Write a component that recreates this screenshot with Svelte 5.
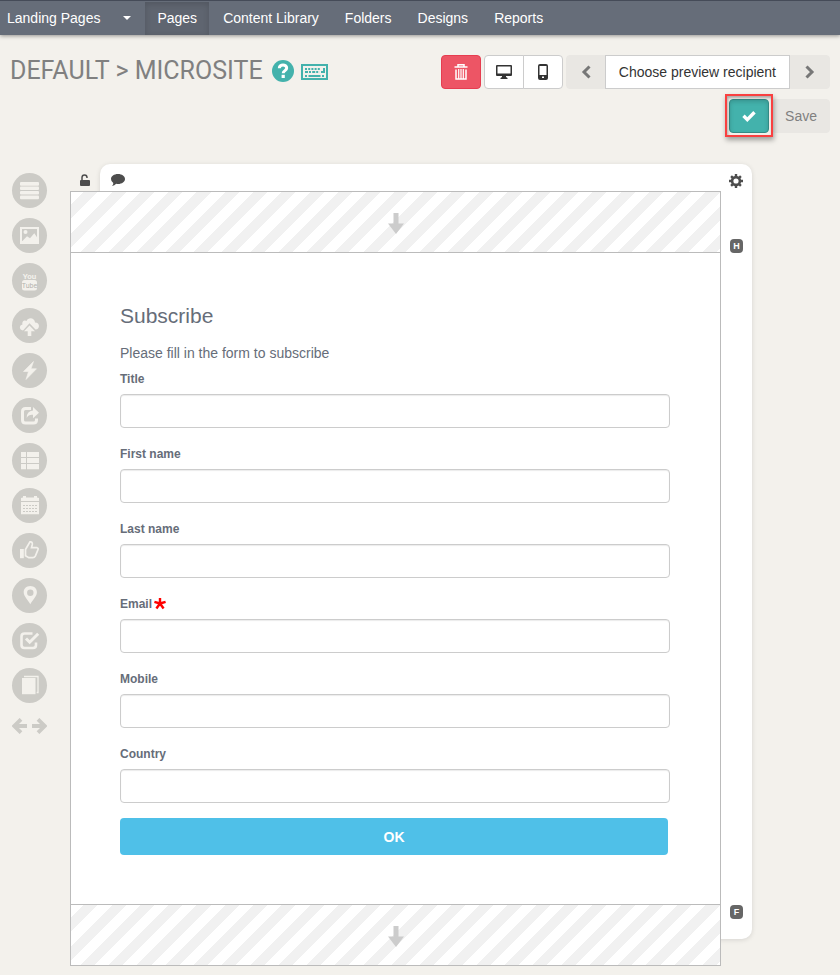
<script lang="ts">
    const menu = ["Pages", "Content Library", "Folders", "Designs", "Reports"];
    let active = "Pages";

    const tools = [
        { id: "text", label: "Text" },
        { id: "image", label: "Image" },
        { id: "youtube", label: "Video" },
        { id: "upload", label: "Upload" },
        { id: "bolt", label: "Action" },
        { id: "share", label: "Share" },
        { id: "list", label: "List" },
        { id: "calendar", label: "Calendar" },
        { id: "like", label: "Like" },
        { id: "marker", label: "Location" },
        { id: "form", label: "Form" },
        { id: "copy", label: "Copy" },
    ];

    let fields = [
        { id: "title", label: "Title", value: "", required: false },
        { id: "firstname", label: "First name", value: "", required: false },
        { id: "lastname", label: "Last name", value: "", required: false },
        { id: "email", label: "Email", value: "", required: true },
        { id: "mobile", label: "Mobile", value: "", required: false },
        { id: "country", label: "Country", value: "", required: false },
    ];
</script>

<svelte:head>
    <title>Default > Microsite</title>
</svelte:head>

<nav class="navbar">
    <a class="brand" href="#landing">Landing Pages</a>
    <button class="caret-btn" aria-label="Switch module">
        <span class="caret"></span>
    </button>
    <div class="menu">
        {#each menu as item}
            <a
                href="#{item}"
                class:active={item === active}
                on:click={() => (active = item)}>{item}</a
            >
        {/each}
    </div>
</nav>

<header class="page-header">
    <div class="heading">
        <h1>DEFAULT &gt; MICROSITE</h1>
        <a href="#help" aria-label="Help">
            <svg width="22" height="22" viewBox="0 0 22 22">
                <circle cx="11" cy="11" r="11" fill="#43b2ac" />
                <path d="M7.3 8.2C7.3 3.8 14.7 3.9 14.7 8.1C14.7 10.6 11.2 10.6 11.2 13.2" fill="none" stroke="#fff" stroke-width="3" />
                <rect x="9.6" y="14.8" width="3.2" height="3.2" fill="#fff" />
            </svg>
        </a>
        <a href="#shortcuts" aria-label="Keyboard shortcuts">
            <svg width="27" height="22" viewBox="0 0 27 22">
                <rect x="1" y="5" width="25" height="14" fill="none" stroke="#43b2ac" stroke-width="2" />
                <g stroke="#43b2ac" stroke-width="2" fill="none">
                    <path d="M4 9h16" stroke-dasharray="2 1.2" />
                    <path d="M4 12h14.500" stroke-dasharray="3 1 2 1.200" />
                    <path d="M20 12h3V8" />
                    <path d="M4 16h2M7.500 16h12M21 16h2" />
                </g>
            </svg>
        </a>
    </div>

    <div class="toolbar">
        <div class="toolbar-row">
            <button class="btn danger" aria-label="Delete">
                <svg width="14" height="16" viewBox="0 0 14 16">
                    <path d="M4 2.500V.8h6v1.700M.5 3h13" fill="none" stroke="#fff" stroke-width="1.500" />
                    <path d="M2 5.500v9.500h10V5.500" fill="none" stroke="#fff" stroke-width="1.500" />
                    <path d="M4.700 5v10M7 5v10M9.300 5v10" stroke="#fff" stroke-width="1.200" />
                </svg>
            </button>
            <div class="group">
                <button class="btn" aria-label="Desktop preview">
                    <svg width="16" height="14" viewBox="0 0 16 14">
                        <path fill="#333" fill-rule="evenodd" d="M1 0h14a1 1 0 0 1 1 1v9a1 1 0 0 1-1 1h-5v1l1.500 1v1h-7v-1L6 12v-1H1a1 1 0 0 1-1-1V1a1 1 0 0 1 1-1zM1.500 1.500v7h13v-7z" />
                    </svg>
                </button>
                <button class="btn" aria-label="Mobile preview">
                    <svg width="10" height="16" viewBox="0 0 10 16">
                        <path fill="#333" fill-rule="evenodd" d="M2 0h6a2 2 0 0 1 2 2v12a2 2 0 0 1-2 2H2a2 2 0 0 1-2-2V2a2 2 0 0 1 2-2zM1.500 2v9h7V2zM4 12.500v1.500h2v-1.500z" />
                    </svg>
                </button>
            </div>
            <div class="group">
                <button class="btn muted" aria-label="Previous recipient">
                    <svg width="10" height="14" viewBox="0 0 10 14">
                        <path d="M8.500 1.500L3 7l5.500 5.500" fill="none" stroke="#777" stroke-width="3" />
                    </svg>
                </button>
                <button class="btn recipient">Choose preview recipient</button>
                <button class="btn muted" aria-label="Next recipient">
                    <svg width="10" height="14" viewBox="0 0 10 14">
                        <path d="M1.500 1.500L7 7l-5.500 5.500" fill="none" stroke="#777" stroke-width="3" />
                    </svg>
                </button>
            </div>
        </div>
        <div class="toolbar-row">
            <button class="btn confirm" aria-label="Approve">
                <svg width="14" height="12" viewBox="0 0 14 12">
                    <path d="M1.500 5.800l3.800 3.800L12.500 2.200" fill="none" stroke="#fff" stroke-width="3.400" />
                </svg>
            </button>
            <button class="btn muted save">Save</button>
        </div>
    </div>
</header>

<main class="workspace">
    <aside class="tools">
        {#each tools as tool (tool.id)}
            <button class="tool" aria-label={tool.label}>
                <svg width="35" height="35" viewBox="0 0 35 35" fill="#f3f1ec">
                    {#if tool.id === "text"}
                        <rect x="8" y="9" width="19" height="3.700" rx="1" />
                        <rect x="8" y="13.600" width="19" height="3.500" rx="1" />
                        <rect x="8" y="18" width="19" height="3.500" rx="1" />
                        <rect x="8" y="22.500" width="19" height="3.700" rx="1" />
                    {:else if tool.id === "image"}
                        <path fill-rule="evenodd" d="M8 9h19v17H8zM10 11v12h.4l4.600-4.800 3 2 4.300-5 2.700 4V11z" />
                        <circle cx="13.500" cy="14" r="2" />
                    {:else if tool.id === "youtube"}
                        <text x="17.500" y="16" class="yt">You</text>
                        <rect x="10" y="17" width="15" height="10.500" rx="2.500" />
                        <text x="17.500" y="25" class="yt tube">Tube</text>
                    {:else if tool.id === "upload"}
                        <path d="M11 22.500C7 22 7 17 10.500 16.500C9.500 13 13 11.500 14.500 13C16 8.500 23 9.500 23 14.500C28.500 14.500 28 21.500 23.500 21.500L17.500 15.300z" />
                        <path d="M17.500 17.500l5.500 5.700h-3.700V28h-3.600v-4.800H12z" />
                    {:else if tool.id === "bolt"}
                        <path d="M21.500 8.500L11.500 18.500H16.500L14 26.500L24.500 15.800H19z" stroke="#f3f1ec" stroke-width=".6" />
                    {:else if tool.id === "share"}
                        <path d="M19 10.500h-5.500q-3 0-3 3V22q0 3 3 3h8q3 0 3-3v-1.500" fill="none" stroke="#f3f1ec" stroke-width="3" />
                        <path d="M21 9l6 5.700-6 5.600v-3.500q-4.500-.5-6.300 3.200Q14.500 13 21 12.500z" />
                    {:else if tool.id === "list"}
                        <path d="M9 9h5v5H9zM15 9h12v5H15zM9 15h5v5H9zM15 15h12v5H15zM9 21h5v5.300H9zM15 21h12v5.300H15z" />
                    {:else if tool.id === "calendar"}
                        <path d="M9 10l2-.5V8h3v1.500h8V8h3v1.500l2 .5v3H9zM9 14h18v12.300H9z" />
                        <path d="M11 17.500h14M11 20.500h14M11 23.500h14" stroke="#cccbc6" stroke-dasharray="2 1" />
                    {:else if tool.id === "like"}
                        <path d="M8 16h3.800v9.200H8z" />
                        <path d="M13.500 16.500L18 8.900q2.700-.4 2.300 2.500l-.8 3.300h5.500q1.800.5.800 2.500l-2.500 6q-.8 1.500-2.500 1.500h-4l-3.300-2z" fill="none" stroke="#f3f1ec" stroke-width="1.700" />
                    {:else if tool.id === "marker"}
                        <path fill-rule="evenodd" d="M18.300 8c4 0 6.600 2.800 6.600 6.300 0 4-4 7.500-6.600 11.900-2.600-4.400-6.600-7.900-6.600-11.900C11.700 10.800 14.300 8 18.300 8zm0 3.500a3.200 3.200 0 1 0 0 6.400 3.200 3.200 0 0 0 0-6.400z" />
                    {:else if tool.id === "form"}
                        <path d="M20.500 10.500h-8q-3 0-3 3v8.500q0 3 3 3h8.500q3 0 3-3v-2.500" fill="none" stroke="#f3f1ec" stroke-width="2.600" />
                        <path d="M14 15.500l3.700 3.700 8.500-8.500" fill="none" stroke="#f3f1ec" stroke-width="3" />
                    {:else}
                        <path d="M10 10h13.500v16.200H10z" />
                        <path d="M12 8.500h14V24.500h-1.300" fill="none" stroke="#f3f1ec" stroke-width="1.300" />
                    {/if}
                </svg>
            </button>
        {/each}
        <button class="resize" aria-label="Resize panel">
            <svg width="35" height="16" viewBox="0 0 35 16">
                <g fill="none" stroke="#cccbc6" stroke-width="3.800">
                    <path d="M9 1.300L2.300 8 9 14.700M3 8h12" />
                    <path d="M26 1.300L32.700 8 26 14.700M32 8H20" />
                </g>
            </svg>
        </button>
    </aside>

    <section class="editor">
        <div class="tabs">
            <button class="tab" aria-label="Unlock">
                <svg width="10" height="12" viewBox="0 0 10 12">
                    <rect y="6" width="10" height="6" rx="1" fill="#4d4d4d" />
                    <path d="M2 6V3.500Q2 .9 4.500.9T7 3.500V4" fill="none" stroke="#4d4d4d" stroke-width="1.500" />
                </svg>
            </button>
            <button class="tab" aria-label="Comments">
                <svg width="14" height="12" viewBox="0 0 14 12">
                    <path d="M7 0c4 0 7 2.200 7 5s-3 5-7 5q-1 0-1.800-.2Q3.500 11.800 1 12q1.500-1.300 1.300-3Q0 7.500 0 5c0-2.800 3-5 7-5z" fill="#4d4d4d" />
                </svg>
            </button>
            <button class="tab settings" aria-label="Settings">
                <svg width="14" height="14" viewBox="0 0 14 14">
                    <circle cx="7" cy="7" r="3.900" fill="none" stroke="#4d4d4d" stroke-width="2.600" />
                    <path d="M7 0v2.500M7 11.500V14M0 7h2.500M11.500 7H14M2.100 2.100l1.700 1.700M10.200 10.200l1.700 1.700M11.900 2.100l-1.700 1.700M3.800 10.200l-1.700 1.700" stroke="#4d4d4d" stroke-width="2.400" />
                </svg>
            </button>
        </div>

        <div class="body">
            <div class="canvas">
                <div class="dropzone">
                    <svg width="16" height="21" viewBox="0 0 16 21">
                        <path d="M5.500 0h5v10.500H16L8 21 0 10.500h5.500z" fill="#ccc" />
                    </svg>
                </div>

                <form class="subscribe" on:submit|preventDefault>
                    <h2>Subscribe</h2>
                    <p>Please fill in the form to subscribe</p>
                    <div class="fields">
                        {#each fields as field (field.id)}
                            <div class="field">
                                <label for={field.id}>
                                    {field.label}
                                    {#if field.required}
                                        <svg width="12" height="12" viewBox="0 0 12 12">
                                            <path d="M6 5.500V0M6 5.500L.4 3.800M6 5.500l5.600-1.700M6 5.500l-3.600 5M6 5.500l3.600 5" stroke="#f00" stroke-width="2.400" />
                                        </svg>
                                    {/if}
                                </label>
                                <input
                                    type="text"
                                    id={field.id}
                                    bind:value={field.value}
                                    required={field.required}
                                />
                            </div>
                        {/each}
                    </div>
                    <button type="submit" class="ok">OK</button>
                </form>

                <div class="dropzone">
                    <svg width="16" height="21" viewBox="0 0 16 21">
                        <path d="M5.500 0h5v10.500H16L8 21 0 10.500h5.500z" fill="#ccc" />
                    </svg>
                </div>
            </div>
            <div class="rail">
                <span class="badge">H</span>
                <span class="badge">F</span>
            </div>
        </div>
    </section>
</main>

<style>
    :global(body) {
        background: #f3f1ec;
        color: #333;
        font-family: "Liberation Sans", Arial, sans-serif;
        font-size: 14px;
        line-height: 20px;
    }

    button {
        font: inherit;
        color: inherit;
        cursor: pointer;
        padding: 0;
        border: none;
        background: none;
    }

    svg {
        display: block;
        flex-shrink: 0;
    }

    .navbar {
        display: flex;
        height: 34px;
        background: #666d79;
        border-top: 1px solid #454b58;
        box-shadow: 0 1px 4px rgba(0, 0, 0, 0.4);
    }

    .navbar a {
        color: #fff;
        text-decoration: none;
        line-height: 34px;
        white-space: nowrap;
    }

    .brand {
        padding-left: 7px;
    }

    .caret-btn {
        display: flex;
        align-items: center;
        justify-content: center;
        width: 36px;
        margin-left: 9px;
    }

    .caret {
        border: 4px solid transparent;
        border-top-color: #fff;
        border-bottom: none;
    }

    .menu {
        display: flex;
        gap: 2px;
    }

    .menu a {
        padding: 0 12px;
    }

    .menu a.active {
        background: #5f6570;
        box-shadow: inset 0 2px 6px rgba(0, 0, 0, 0.15);
        margin-top: 1px;
        line-height: 32px;
    }

    .page-header {
        display: flex;
        justify-content: space-between;
        align-items: flex-start;
        padding: 20px 10px 31px;
    }

    .heading {
        display: flex;
        align-items: center;
        gap: 7px;
    }

    h1 {
        margin: 0;
        padding-right: 2px;
        font-family: Roboto, "Liberation Sans", sans-serif;
        font-size: 25px;
        font-weight: normal;
        line-height: 32px;
        color: #808080;
        white-space: nowrap;
    }

    .toolbar {
        display: flex;
        flex-direction: column;
        gap: 10px;
    }

    .toolbar-row {
        display: flex;
        justify-content: flex-end;
        gap: 3px;
    }

    .group {
        display: flex;
    }

    .btn {
        display: flex;
        align-items: center;
        justify-content: center;
        box-sizing: border-box;
        min-width: 40px;
        height: 34px;
        background: #fff;
        border: 1px solid #ccc;
        border-radius: 4px;
        white-space: nowrap;
    }

    .group .btn:not(:first-child) {
        border-top-left-radius: 0;
        border-bottom-left-radius: 0;
    }

    .group .btn:not(:last-child) {
        border-top-right-radius: 0;
        border-bottom-right-radius: 0;
    }

    .group .btn + .btn:not(.muted) {
        margin-left: -1px;
    }

    .btn.danger {
        background: #ed5565;
        border-color: #e63d50;
    }

    .btn.muted {
        background: #e9e7e3;
        border-color: #e9e7e3;
        color: #808080;
    }

    .btn.recipient {
        padding: 0 13px;
    }

    .btn.confirm {
        position: relative;
        background: #43b2ac;
        border-color: #338a85;
        box-shadow: inset 0 2px 4px rgba(0, 0, 0, 0.15);
    }

    .btn.confirm::after {
        content: "";
        position: absolute;
        inset: -6px -5px -5px;
        border: 2px solid #f94040;
        box-shadow: 1px 3px 5px rgba(0, 0, 0, 0.35), inset 1px 2px 3px rgba(0, 0, 0, 0.3);
    }

    .btn.save {
        padding: 0 12px;
    }

    .workspace {
        display: flex;
        align-items: flex-start;
        gap: 23px;
        padding: 0 12px 9px;
    }

    .tools {
        display: flex;
        flex-direction: column;
        gap: 10px;
        padding-top: 9px;
    }

    .tool {
        width: 35px;
        height: 35px;
        border-radius: 50%;
        background: #cccbc6;
    }

    .resize {
        margin-top: 5px;
    }

    .yt {
        font-family: Roboto, sans-serif;
        font-size: 8px;
        font-weight: bold;
        text-anchor: middle;
    }

    .yt.tube {
        font-size: 7px;
        font-weight: normal;
        fill: #b5b4af;
    }

    .editor {
        position: relative;
        flex: 1;
        max-width: 682px;
    }

    .editor::before {
        content: "";
        position: absolute;
        inset: 0 0 27px 30px;
        background: #fff;
        border-radius: 10px;
        box-shadow: 0 1px 5px rgba(0, 0, 0, 0.12);
    }

    .tabs,
    .body {
        position: relative;
        display: flex;
    }

    .tabs {
        height: 27px;
    }

    .tab {
        display: flex;
        align-items: center;
        justify-content: center;
        width: 30px;
        padding-top: 4px;
    }

    .tab + .tab {
        width: 36px;
    }

    .tab.settings {
        width: 32px;
        margin-left: auto;
        padding-top: 7px;
    }

    .canvas {
        flex: 1;
        background: #fff;
        border: 1px solid #bbb;
    }

    .dropzone {
        display: flex;
        align-items: center;
        justify-content: center;
        height: 60px;
        padding-top: 3px;
        box-sizing: border-box;
        background: repeating-linear-gradient(
            135deg,
            #fff 0,
            #fff 9px,
            #f1f1f1 9px,
            #f1f1f1 19px,
            #fff 19px,
            #fff 20px
        );
    }

    .subscribe {
        display: flex;
        flex-direction: column;
        padding: 51px 50px 49px 49px;
        border-top: 1px solid #bbb;
        border-bottom: 1px solid #bbb;
        color: #666d79;
    }

    h2 {
        margin: 0 0 15px;
        font-size: 21px;
        font-weight: normal;
        line-height: 24px;
    }

    p {
        margin: 0 0 6px;
    }

    .fields {
        display: flex;
        flex-direction: column;
        gap: 16px;
    }

    .field {
        display: flex;
        flex-direction: column;
        gap: 5px;
    }

    label {
        display: flex;
        align-items: center;
        gap: 2px;
        font-size: 12px;
        font-weight: bold;
    }

    input {
        box-sizing: border-box;
        width: 100%;
        height: 34px;
        padding: 6px 12px;
        font: inherit;
        border: 1px solid #ccc;
        border-radius: 4px;
        box-shadow: inset 0 1px 1px rgba(0, 0, 0, 0.08);
        outline: none;
    }

    .ok {
        height: 37px;
        margin: 15px 2px 0 0;
        background: #4fc0e8;
        border-radius: 4px;
        color: #fff;
        font-weight: bold;
    }

    .rail {
        display: flex;
        flex-direction: column;
        align-items: center;
        justify-content: space-between;
        width: 31px;
        padding: 48px 0 47px;
    }

    .badge {
        width: 13px;
        border-radius: 4px;
        background: #666;
        color: #fff;
        font-size: 9px;
        font-weight: bold;
        line-height: 14px;
        text-align: center;
    }
</style>
